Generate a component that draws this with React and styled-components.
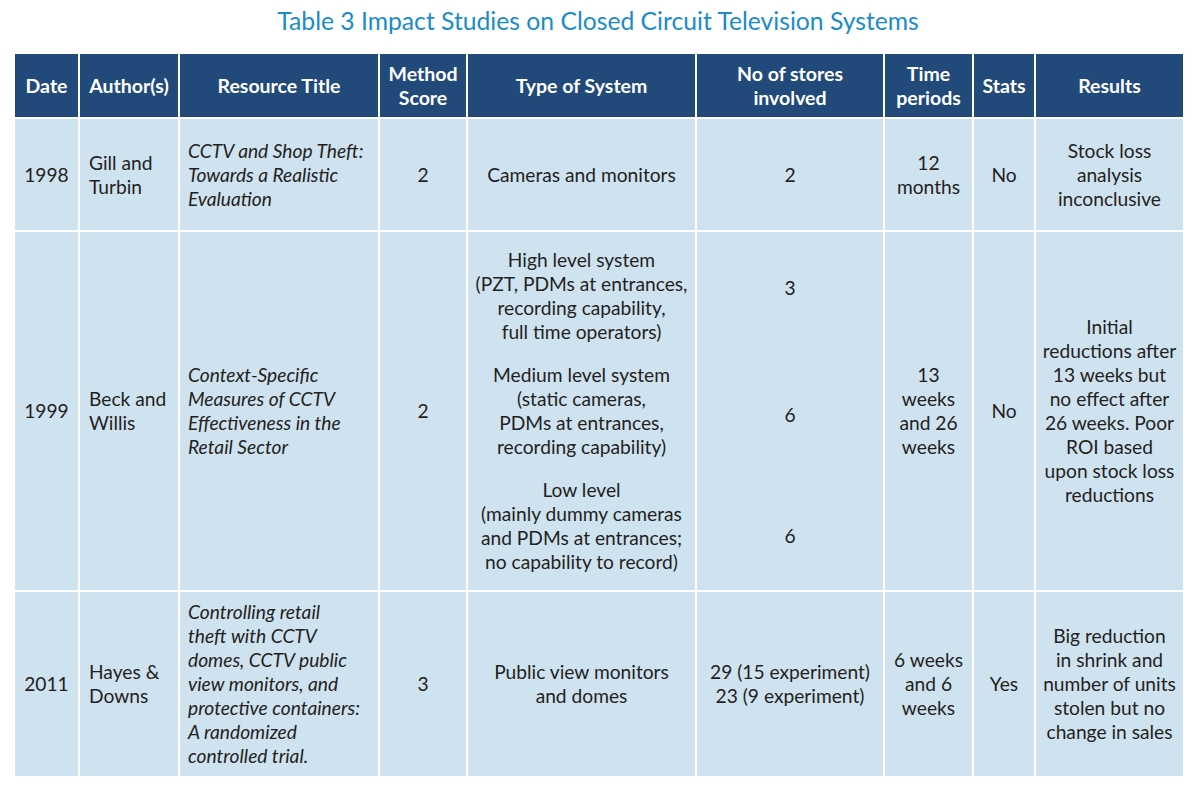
import React from "react";
import styled, { createGlobalStyle } from "styled-components";

const Global = createGlobalStyle`
  body {
    margin: 0;
    background: #ffffff;
    font-family: Lato, "Open Sans", sans-serif;
  }
`;

const Page = styled.div`
  width: 1196px;
  padding: 4px 13px 0;
  box-sizing: border-box;
`;

const Title = styled.h2`
  margin: 0 0 14px;
  line-height: 34px;
  text-align: center;
  font-weight: 400;
  font-size: 24.7px;
  color: #1a8bcb;
`;

const Table = styled.table`
  width: 1170px;
  border-collapse: collapse;
  table-layout: fixed;
  font-size: 19.2px;
  line-height: 24px;
  color: #231f20;
`;

const Row = styled.tr`
  height: ${(p) => p.h}px;
`;

const Th = styled.th`
  background: #214a7b;
  color: #ffffff;
  font-weight: 700;
  font-size: 19.5px;
  border: 2px solid #ffffff;
  padding: 0;
  white-space: nowrap;
  text-align: center;
  vertical-align: middle;
`;

const Td = styled.td`
  background: #cfe2f0;
  border: 2px solid #ffffff;
  padding: 0 ${(p) => p.pad || 0}px;
  white-space: nowrap;
  text-align: ${(p) => (p.left ? "left" : "center")};
  font-style: ${(p) => (p.italic ? "italic" : "normal")};
  vertical-align: middle;
`;

const Stack = styled.div`
  display: flex;
  flex-direction: column;
  gap: 19px;
`;

const Group = styled.div`
  height: 96px;
  box-sizing: border-box;
  padding-top: ${(p) => p.top || 0}px;
`;

const cols = [65, 100, 200, 88, 229, 188, 89, 62, 149];

export default function App() {
  return (
    <Page>
      <Global />
      <Title>Table 3 Impact Studies on Closed Circuit Television Systems</Title>
      <Table>
        <colgroup>
          {cols.map((w, i) => (
            <col key={i} style={{ width: w }} />
          ))}
        </colgroup>
        <thead>
          <Row h={65}>
            <Th>Date</Th>
            <Th>Author(s)</Th>
            <Th>Resource Title</Th>
            <Th>Method<br />Score</Th>
            <Th>Type of System</Th>
            <Th>No of stores<br />involved</Th>
            <Th>Time<br />periods</Th>
            <Th>Stats</Th>
            <Th>Results</Th>
          </Row>
        </thead>
        <tbody>
          <Row h={113}>
            <Td>1998</Td>
            <Td left pad={9}>Gill and<br />Turbin</Td>
            <Td left italic pad={8}>CCTV and Shop Theft:<br />Towards a Realistic<br />Evaluation</Td>
            <Td>2</Td>
            <Td>Cameras and monitors</Td>
            <Td>2</Td>
            <Td>12<br />months</Td>
            <Td>No</Td>
            <Td>Stock loss<br />analysis<br />inconclusive</Td>
          </Row>
          <Row h={360}>
            <Td>1999</Td>
            <Td left pad={9}>Beck and<br />Willis</Td>
            <Td left italic pad={8}>Context-Specific<br />Measures of CCTV<br />Effectiveness in the<br />Retail Sector</Td>
            <Td>2</Td>
            <Td>
              <Stack>
                <Group>High level system<br />(PZT, PDMs at entrances,<br />recording capability,<br />full time operators)</Group>
                <Group>Medium level system<br />(static cameras,<br />PDMs at entrances,<br />recording capability)</Group>
                <Group>Low level<br />(mainly dummy cameras<br />and PDMs at entrances;<br />no capability to record)</Group>
              </Stack>
            </Td>
            <Td>
              <Stack>
                <Group top={28}>3</Group>
                <Group top={40}>6</Group>
                <Group top={46}>6</Group>
              </Stack>
            </Td>
            <Td>13<br />weeks<br />and 26<br />weeks</Td>
            <Td>No</Td>
            <Td>Initial<br />reductions after<br />13 weeks but<br />no effect after<br />26 weeks. Poor<br />ROI based<br />upon stock loss<br />reductions</Td>
          </Row>
          <Row h={186}>
            <Td>2011</Td>
            <Td left pad={9}>Hayes &amp;<br />Downs</Td>
            <Td left italic pad={8}>Controlling retail<br />theft with CCTV<br />domes, CCTV public<br />view monitors, and<br />protective containers:<br />A randomized<br />controlled trial.</Td>
            <Td>3</Td>
            <Td>Public view monitors<br />and domes</Td>
            <Td>29 (15 experiment)<br />23 (9 experiment)</Td>
            <Td>6 weeks<br />and 6<br />weeks</Td>
            <Td>Yes</Td>
            <Td>Big reduction<br />in shrink and<br />number of units<br />stolen but no<br />change in sales</Td>
          </Row>
        </tbody>
      </Table>
    </Page>
  );
}
